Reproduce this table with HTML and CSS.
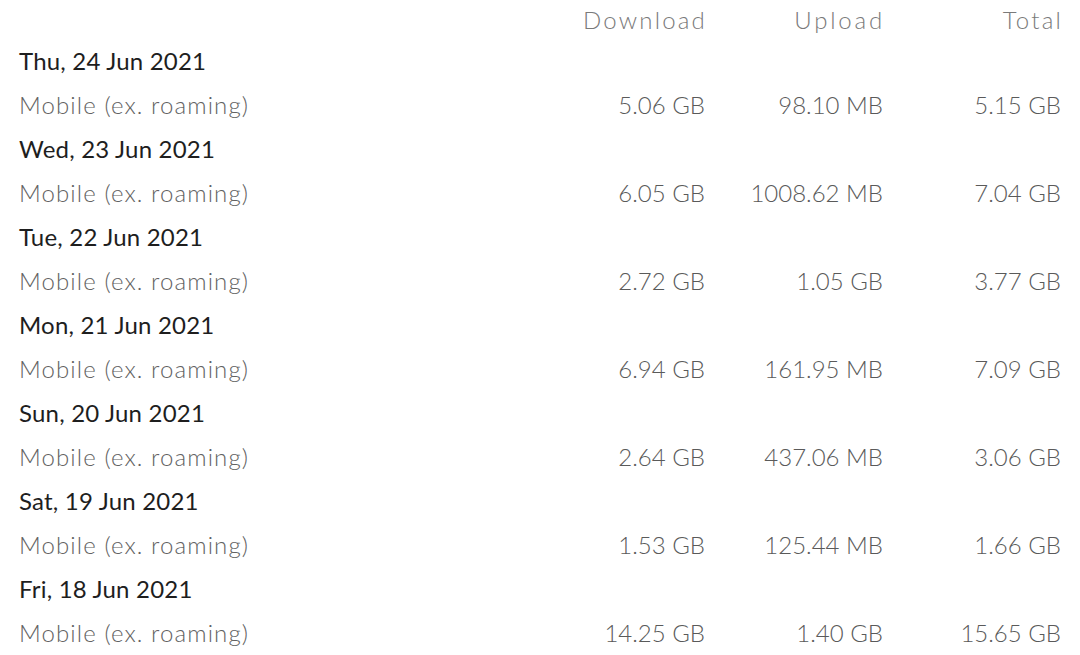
FILE: index.html
```html
<!DOCTYPE html>
<html>
<head>
<meta charset="utf-8">
<link rel="stylesheet" href="styles.css">
</head>
<body>
<div class="table">
  <div class="row head">
    <div class="label"></div>
    <div class="num">Download</div>
    <div class="num">Upload</div>
    <div class="num">Total</div>
  </div>
  <div class="row date"><div class="label">Thu, 24 Jun 2021</div></div>
  <div class="row item"><div class="label">Mobile (ex. roaming)</div><div class="num">5.06 GB</div><div class="num">98.10 MB</div><div class="num">5.15 GB</div></div>
  <div class="row date"><div class="label">Wed, 23 Jun 2021</div></div>
  <div class="row item"><div class="label">Mobile (ex. roaming)</div><div class="num">6.05 GB</div><div class="num">1008.62 MB</div><div class="num">7.04 GB</div></div>
  <div class="row date"><div class="label">Tue, 22 Jun 2021</div></div>
  <div class="row item"><div class="label">Mobile (ex. roaming)</div><div class="num">2.72 GB</div><div class="num">1.05 GB</div><div class="num">3.77 GB</div></div>
  <div class="row date"><div class="label">Mon, 21 Jun 2021</div></div>
  <div class="row item"><div class="label">Mobile (ex. roaming)</div><div class="num">6.94 GB</div><div class="num">161.95 MB</div><div class="num">7.09 GB</div></div>
  <div class="row date"><div class="label">Sun, 20 Jun 2021</div></div>
  <div class="row item"><div class="label">Mobile (ex. roaming)</div><div class="num">2.64 GB</div><div class="num">437.06 MB</div><div class="num">3.06 GB</div></div>
  <div class="row date"><div class="label">Sat, 19 Jun 2021</div></div>
  <div class="row item"><div class="label">Mobile (ex. roaming)</div><div class="num">1.53 GB</div><div class="num">125.44 MB</div><div class="num">1.66 GB</div></div>
  <div class="row date"><div class="label">Fri, 18 Jun 2021</div></div>
  <div class="row item"><div class="label">Mobile (ex. roaming)</div><div class="num">14.25 GB</div><div class="num">1.40 GB</div><div class="num">15.65 GB</div></div>
</div>
</body>
</html>
```
FILE: styles.css
```css
html, body {
  margin: 0;
  padding: 0;
  background: #ffffff;
}
body {
  font-family: "Lato", "Liberation Sans", sans-serif;
  font-size: 24px;
  font-weight: 300;
}
.table {
  display: flex;
  flex-direction: column;
  padding: 0 19px;
}
.row {
  display: grid;
  grid-template-columns: 1fr 178px 178px 178px;
  align-items: center;
  height: 44px;
}
.row.head {
  height: 38px;
  color: #7a7a7a;
  letter-spacing: 2.2px;
}
.row.head .num {
  margin-right: -2px;
}
.row.head .num:nth-child(3) {
  letter-spacing: 2.8px;
}
.num {
  text-align: right;
  white-space: nowrap;
}
.date .label {
  color: #1e1e1e;
  font-weight: 400;
  letter-spacing: 0.2px;
}
.item {
  color: #5a5a5a;
}
.item .label {
  color: #626262;
  letter-spacing: 1.1px;
}
```
